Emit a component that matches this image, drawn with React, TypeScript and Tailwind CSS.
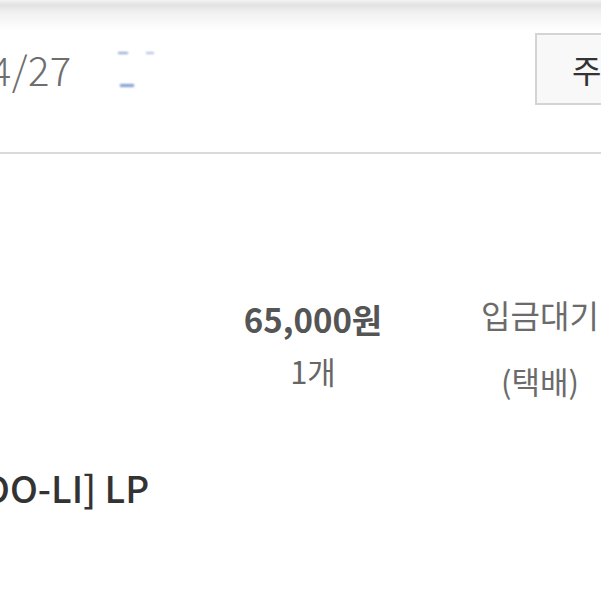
import React from "react";

export default function App() {
  return (
    <div className="w-[601px] h-[601px] overflow-hidden bg-white font-['Noto_Sans_CJK_KR','Noto_Sans',sans-serif]">
      {/* header */}
      <div className="h-[152px] bg-[linear-gradient(to_bottom,#f3f3f3_0px,#e2e2e2_5px,#f0f0f0_12px,#ffffff_30px)] flex items-center pb-[14px]">
        <div className="ml-[-136px] text-[40px] leading-none font-light text-[#6e6e6e] tracking-[0.5px] whitespace-nowrap">
          2024/04/27
        </div>
        <div className="ml-[46px] flex flex-col gap-[30px] blur-[1px] opacity-70">
          <div className="flex gap-[18px]">
            <span className="block w-[10px] h-[2px] bg-[#5b7fbf]"></span>
            <span className="block w-[8px] h-[2px] bg-[#8ea5cf]"></span>
          </div>
          <span className="block w-[14px] h-[3px] bg-[#4a74c0] ml-[2px]"></span>
        </div>
        <div className="ml-auto mr-[-122px] h-[72px] w-[188px] border-2 border-[#d4d4d4] bg-[#f8f8f8] flex items-center pl-[35px] text-[32px] text-[#333] whitespace-nowrap">
          주문상세
        </div>
      </div>
      <div className="h-[2px] bg-[#dadada]"></div>

      {/* body */}
      <div className="pt-[149px] flex">
        <div className="w-[233px] shrink-0"></div>
        <div className="w-[160px] shrink-0 flex flex-col items-center text-[#555]">
          <div className="text-[33px] font-bold leading-none whitespace-nowrap">65,000원</div>
          <div className="mt-[19px] text-[31px] leading-none text-[#666] whitespace-nowrap">1개</div>
        </div>
        <div className="ml-[67px] w-[160px] shrink-0 flex flex-col items-center text-[#6b6b6b]">
          <div className="mt-[-5px] text-[32px] leading-none whitespace-nowrap">입금대기</div>
          <div className="mt-[35px] text-[31px] leading-none whitespace-nowrap">(택배)</div>
        </div>
      </div>
      <div className="mt-[73px] ml-[-57px] text-[37px] font-medium leading-none text-[#333] whitespace-nowrap">
        [DOO-LI] LP
      </div>
    </div>
  );
}
